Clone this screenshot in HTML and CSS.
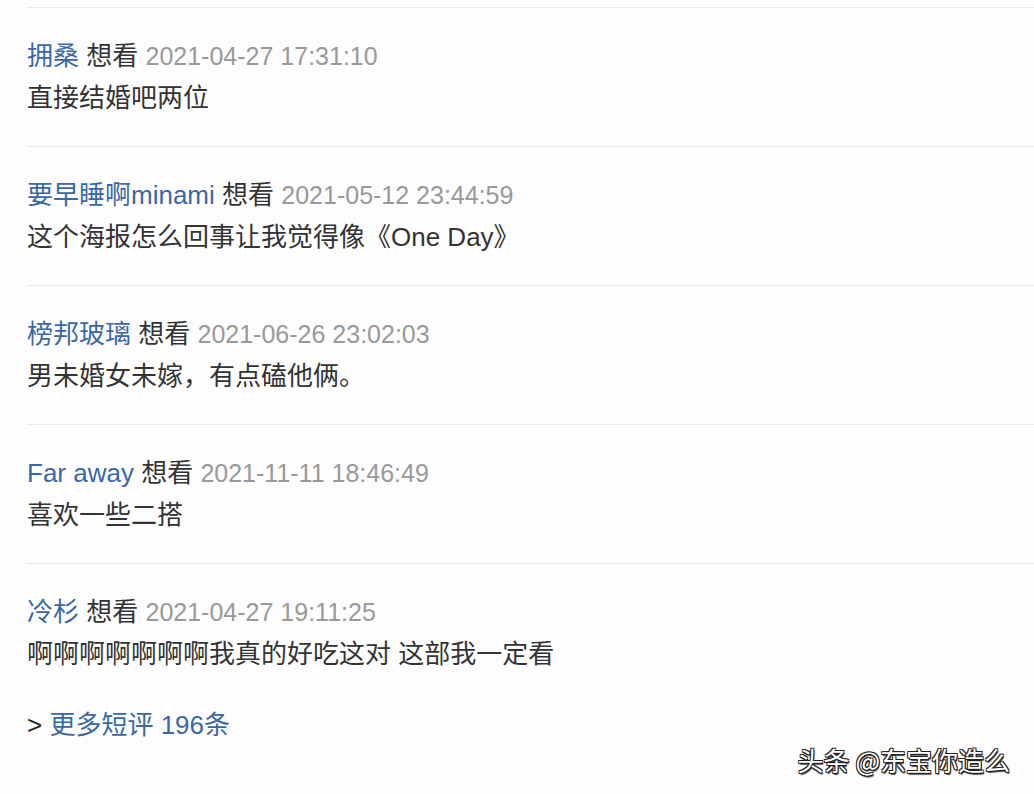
FILE: index.html
```html
<!DOCTYPE html>
<html lang="zh-CN">
<head>
<meta charset="utf-8">
<title>短评</title>
<link rel="stylesheet" href="styles.css">
</head>
<body>
<div class="page">
  <ul class="comments">
    <li class="comment">
      <div class="meta"><span class="name">拥桑</span> <span class="status">想看</span> <span class="time">2021-04-27 17:31:10</span></div>
      <p class="text">直接结婚吧两位</p>
    </li>
    <li class="comment">
      <div class="meta"><span class="name">要早睡啊minami</span> <span class="status">想看</span> <span class="time">2021-05-12 23:44:59</span></div>
      <p class="text">这个海报怎么回事让我觉得像《One Day》</p>
    </li>
    <li class="comment">
      <div class="meta"><span class="name">榜邦玻璃</span> <span class="status">想看</span> <span class="time">2021-06-26 23:02:03</span></div>
      <p class="text">男未婚女未嫁，有点磕他俩。</p>
    </li>
    <li class="comment">
      <div class="meta"><span class="name">Far away</span> <span class="status">想看</span> <span class="time">2021-11-11 18:46:49</span></div>
      <p class="text">喜欢一些二搭</p>
    </li>
    <li class="comment">
      <div class="meta"><span class="name">冷杉</span> <span class="status">想看</span> <span class="time">2021-04-27 19:11:25</span></div>
      <p class="text">啊啊啊啊啊啊啊我真的好吃这对 这部我一定看</p>
    </li>
  </ul>
  <div class="more">&gt; <a class="more-link" href="#">更多短评 196条</a></div>
  <div class="watermark">头条 @东宝你造么</div>
</div>
</body>
</html>
```
FILE: styles.css
```css
html, body {
  margin: 0;
  padding: 0;
  background: #fdfdfd;
}
body {
  font-family: "Liberation Sans", "Noto Sans CJK SC", sans-serif;
  font-size: 26px;
  color: #333;
}
.page {
  position: relative;
  width: 1034px;
  height: 794px;
  overflow: hidden;
  padding: 7px 0 0 27px;
  box-sizing: border-box;
}
.comments {
  list-style: none;
  margin: 0;
  padding: 0;
}
.comment {
  border-top: 1px solid #e9e9ec;
  padding: 27px 0 27px 0;
  line-height: 42px;
}
.meta {
  white-space: nowrap;
}
.name {
  color: #3a68a6;
}
.status {
  color: #333;
}
.time {
  color: #999;
  font-size: 25px;
}
.text {
  margin: 0;
  color: #333;
}
.more {
  margin-top: 2px;
  line-height: 42px;
  color: #222;
}
.more-link {
  color: #3a68a6;
  text-decoration: none;
}
.watermark {
  position: absolute;
  right: 24px;
  bottom: 17px;
  font-family: "Noto Sans CJK SC", sans-serif;
  font-size: 26px;
  line-height: 34px;
  color: #fff;
  text-shadow: -1px -1px 0 #222, 1px -1px 0 #222, -1px 1px 0 #222, 1px 1px 0 #222, 1px 2px 1px #444;
}
```
